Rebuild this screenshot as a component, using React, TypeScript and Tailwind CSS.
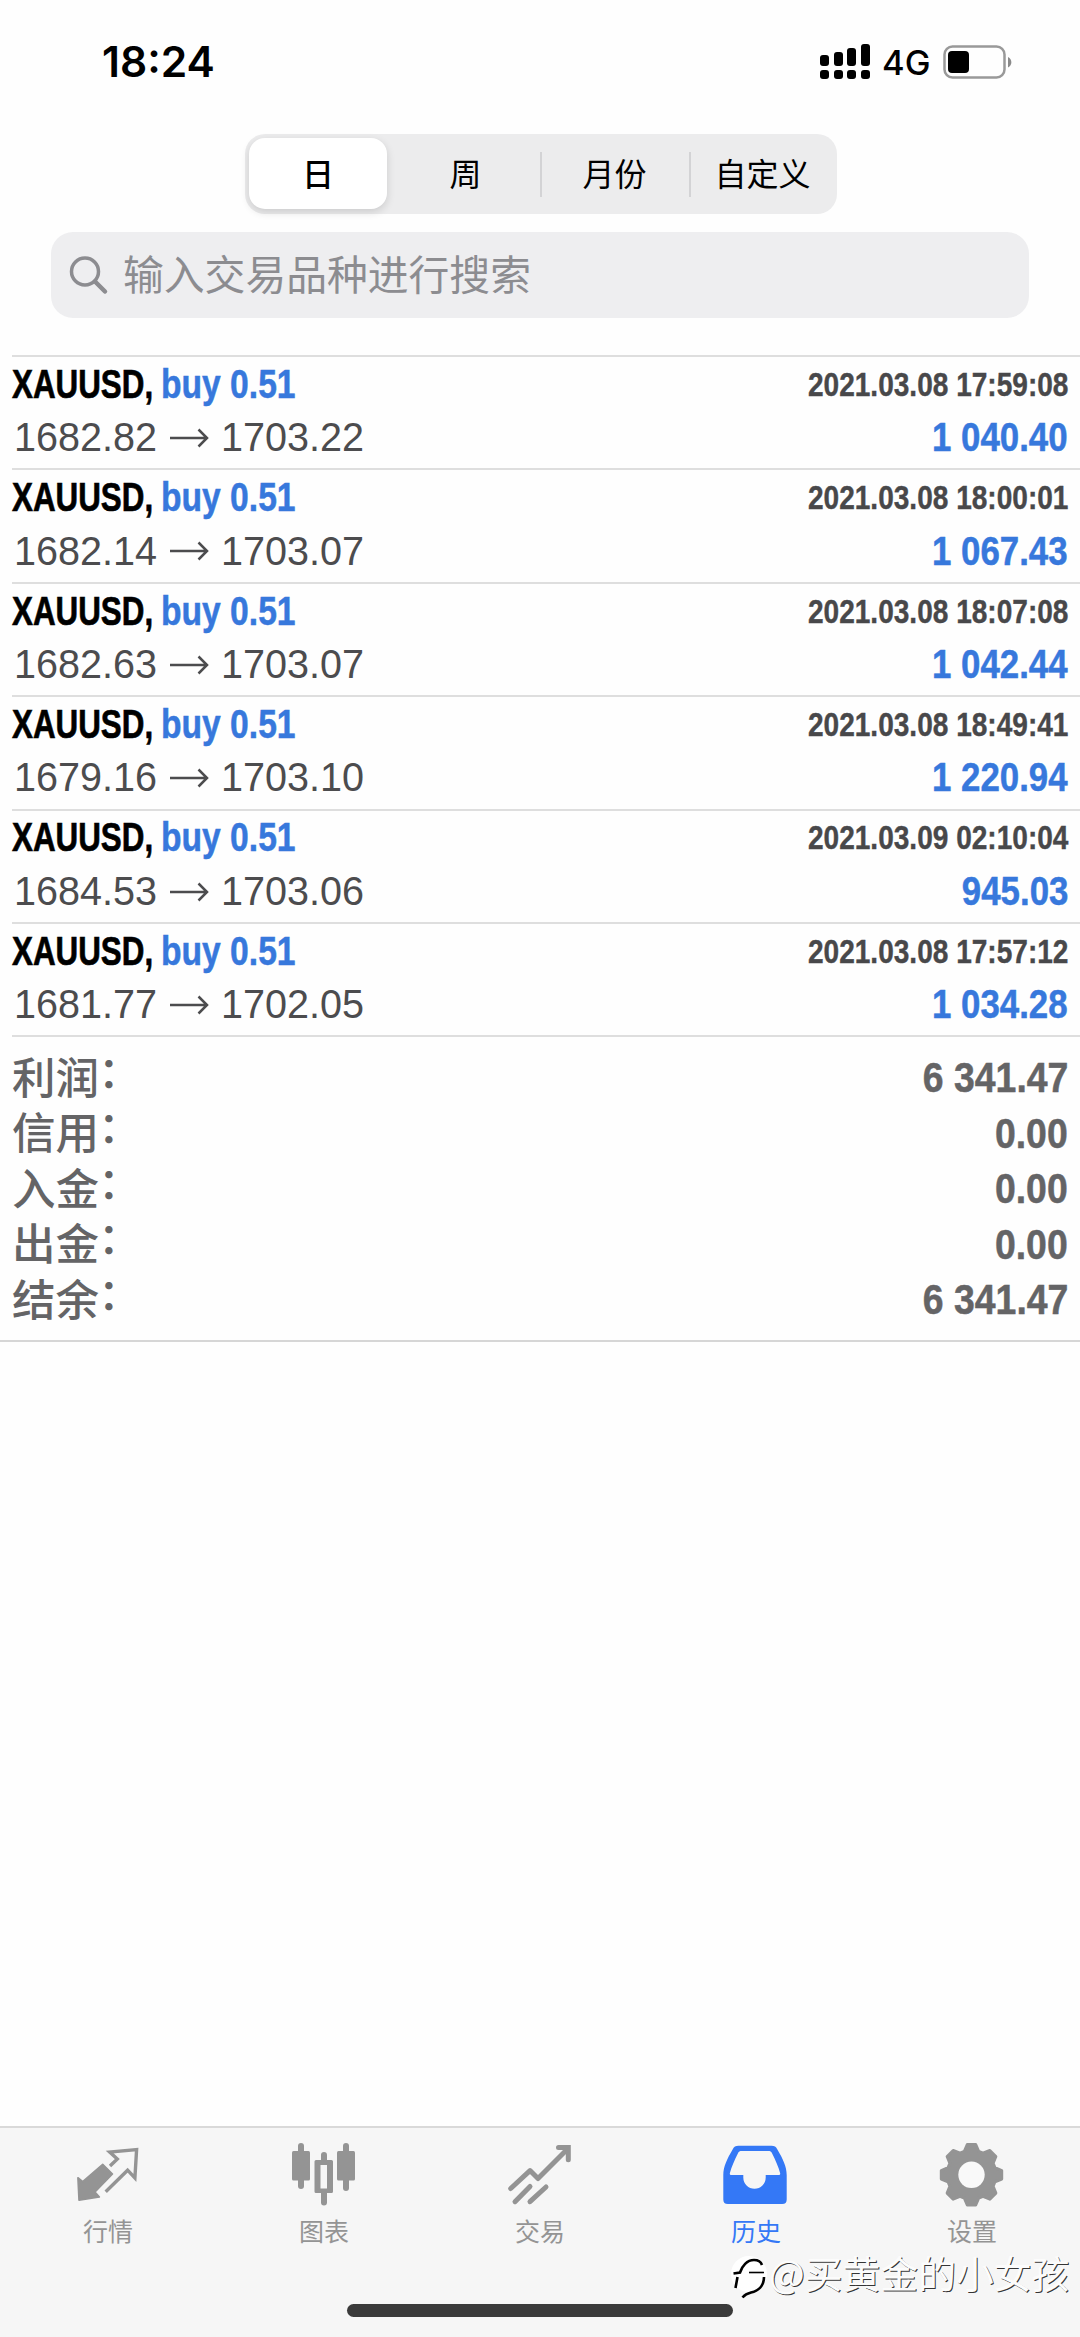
import React from "react";
import clsx from "clsx";

const periods = [
  { label: "日", width: "w-[138px]" },
  { label: "周", width: "w-[149px]" },
  { label: "月份", width: "w-[149px]" },
  { label: "自定义", width: "w-[147px]" },
];

const deals = [
  { open: "1682.82", close: "1703.22", time: "2021.03.08 17:59:08", profit: "1 040.40" },
  { open: "1682.14", close: "1703.07", time: "2021.03.08 18:00:01", profit: "1 067.43" },
  { open: "1682.63", close: "1703.07", time: "2021.03.08 18:07:08", profit: "1 042.44" },
  { open: "1679.16", close: "1703.10", time: "2021.03.08 18:49:41", profit: "1 220.94" },
  { open: "1684.53", close: "1703.06", time: "2021.03.09 02:10:04", profit: "945.03" },
  { open: "1681.77", close: "1702.05", time: "2021.03.08 17:57:12", profit: "1 034.28" },
];

const totals = [
  { label: "利润", value: "6 341.47" },
  { label: "信用", value: "0.00" },
  { label: "入金", value: "0.00" },
  { label: "出金", value: "0.00" },
  { label: "结余", value: "6 341.47" },
];

function gearPath(cx: number, cy: number) {
  const pts: string[] = [];
  for (let i = 0; i < 8; i++) {
    const steps = [[-17, 24.5], [-8, 30.5], [8, 30.5], [17, 24.5]];
    for (const [offset, r] of steps) {
      const a = ((i * 45 + offset) * Math.PI) / 180;
      pts.push(`${(cx + r * Math.sin(a)).toFixed(2)} ${(cy - r * Math.cos(a)).toFixed(2)}`);
    }
  }
  return `M${pts.join("L")}Z`;
}

const QuotesIcon = () => (
  <svg viewBox="0 0 64 66" className="w-16 h-[66px] overflow-visible" fill="none" stroke="currentColor">
    <path d="M26.7 22.3 36.5 32 19 50l4.4 5L3 58.2 1.9 35.7l4.8 4Z" fill="currentColor" strokeWidth="1.6" strokeLinejoin="round" />
    <path d="M34 24l7.3-7-7.6-7L60.6 7.6 58.9 36 51.6 28.2 29.7 49.7" strokeWidth="3.4" />
  </svg>
);

const ChartIcon = () => (
  <svg viewBox="0 0 64 66" className="w-16 h-[66px] overflow-visible" fill="currentColor">
    <rect x="0" y="9" width="18" height="29.5" rx="1.5" />
    <rect x="6" y="1" width="6" height="46" rx="3" />
    <rect x="45" y="9" width="18" height="29.5" rx="1.5" />
    <rect x="51" y="1" width="6" height="48" rx="3" />
    <path fillRule="evenodd" d="M24 18h5v-5a3 3 0 0 1 6 0v5h4.500a1.500 1.500 0 0 1 1.500 1.500v30a1.500 1.500 0 0 1-1.500 1.500H35v9.500a3 3 0 0 1-6 0V51h-5a1.500 1.500 0 0 1-1.500-1.500v-30A1.500 1.500 0 0 1 24 18ZM28.500 23v23.500h6.500V23Z" />
  </svg>
);

const TradeIcon = () => (
  <svg viewBox="0 0 64 66" className="w-16 h-[66px] overflow-visible" fill="none" stroke="currentColor" strokeWidth="5" strokeLinecap="round">
    <path d="M2.700 46.500 22 28.600l8 8L58.500 8" strokeLinejoin="round" />
    <path d="M50.500 5.500h9.800v12.300" strokeLinejoin="miter" />
    <path d="M7 59.700 22 44.500M22 59.700l16-14.700" />
  </svg>
);

const HistoryIcon = () => (
  <svg viewBox="0 0 64 66" className="w-16 h-[66px] overflow-visible" fill="currentColor">
    <path
      fillRule="evenodd"
      d="M14.500 3.700h33c3 0 4.500 1 5.600 3.400C59 17 62.700 25 62.700 33v24.500c0 3-1.500 4.500-4.500 4.500H3.800C.8 62-.7 60.500-.7 57.500V33C-.7 25 3 17 8.900 7.100 10 4.700 11.500 3.700 14.500 3.700ZM17.500 9c-1.700 0-2.700.6-3.400 2C10.500 18 7.500 25 5.900 31c-.4 1.500.2 2 1.600 2h11.800v2.500a11.200 11.200 0 0 0 22.400 0V33h12.800c1.400 0 2-.5 1.600-2-1.600-6-4.600-13-8.200-20-.7-1.400-1.700-2-3.400-2Z"
    />
  </svg>
);

const SettingsIcon = () => (
  <svg viewBox="0 0 64 66" className="w-16 h-[66px] overflow-visible">
    <path d={gearPath(31.5, 32.8)} fill="currentColor" stroke="currentColor" strokeWidth="3" strokeLinejoin="round" />
    <circle cx="31.5" cy="32.8" r="13.2" fill="#f9f9f9" />
  </svg>
);

const tabs = [
  { label: "行情", icon: <QuotesIcon /> },
  { label: "图表", icon: <ChartIcon /> },
  { label: "交易", icon: <TradeIcon /> },
  { label: "历史", icon: <HistoryIcon />, active: true },
  { label: "设置", icon: <SettingsIcon /> },
];

function StatusBar() {
  return (
    <div className="h-[134px] pt-[36px] pl-[102px] pr-[67px] flex justify-between items-start font-['Inter',sans-serif] text-black">
      <span className="text-[42.500px] leading-[51px] font-semibold">18:24</span>
      <div className="flex items-center h-[51px]">
        <svg viewBox="0 0 50 36" className="w-[50px] h-[36px]">
          <rect x="0" y="11" width="9" height="11" rx="3" />
          <rect x="14" y="8" width="9" height="14" rx="3" />
          <rect x="27" y="4" width="9" height="18" rx="3" />
          <rect x="41" y="0" width="9" height="22" rx="3" />
          <rect x="0" y="26" width="9" height="9" rx="3" />
          <rect x="14" y="26" width="9" height="9" rx="3" />
          <rect x="27" y="26" width="9" height="9" rx="3" />
          <rect x="41" y="26" width="9" height="9" rx="3" />
        </svg>
        <span className="ml-[12px] w-[49px] text-[34.500px] leading-[51px] pt-[2px] whitespace-nowrap font-medium">4G</span>
        <svg viewBox="0 0 70 34" className="ml-[12px] w-[70px] h-[34px]">
          <rect x="1.500" y="1.500" width="60" height="31" rx="8" fill="none" stroke="#999" strokeWidth="2.500" />
          <rect x="5" y="6" width="21" height="22" rx="4" />
          <path d="M65 12c4.500 2 4.500 8.500 0 10.500Z" fill="#8a8a8a" />
        </svg>
      </div>
    </div>
  );
}

function PeriodSwitch() {
  return (
    <div className="ml-[245px] w-[592px] h-[80px] rounded-[20px] bg-[#ececed] p-[4px] flex">
      {periods.map((p, i) => (
        <div
          key={p.label}
          className={clsx(
            "h-[71px] shrink-0 flex items-center justify-center pb-[3px] text-[32px] text-black relative",
            p.width,
            i === 0 && "mr-[4px] rounded-[16px] bg-white font-medium shadow-[0_3px_8px_rgba(0,0,0,0.14)]"
          )}
        >
          {p.label}
          {i > 1 && <span className="absolute left-0 top-[14px] w-[2px] h-[45px] bg-[#d3d3d5]" />}
        </div>
      ))}
    </div>
  );
}

function SearchBox() {
  return (
    <div className="mt-[18px] ml-[51px] w-[978px] h-[86px] rounded-[22px] bg-[#eeeef0] flex items-center pl-[18px] text-[#8c8c90]">
      <svg viewBox="0 0 40 40" className="w-[40px] h-[40px]" fill="none" stroke="currentColor" strokeWidth="3.500" strokeLinecap="round">
        <circle cx="16" cy="16.500" r="13.500" />
        <path d="M26 26.500 36 36.500" strokeWidth="4.500" />
      </svg>
      <span className="ml-[14px] pb-[4px] text-[40.800px] leading-none">输入交易品种进行搜索</span>
    </div>
  );
}

function DealRow({ deal }: { deal: (typeof deals)[number] }) {
  return (
    <div className="h-[113.400px] ml-[12px] pr-[12px] pt-px border-t-2 border-[#dedede] font-['Liberation_Sans',Arial,sans-serif]">
      <div className="flex h-[53px] items-center font-bold whitespace-nowrap">
        <span className="w-[149px] text-[41px] text-black [-webkit-text-stroke:0.7px]">
          <span className="inline-block origin-left scale-x-[0.765]">XAUUSD,</span>
        </span>
        <span className="text-[41px] text-[#3778dc] [-webkit-text-stroke:0.5px]">
          <span className="inline-block origin-left scale-x-[0.82]">buy 0.51</span>
        </span>
        <span className="ml-auto text-[33px] text-[#48484a] origin-right scale-x-[0.85] [-webkit-text-stroke:0.4px]">{deal.time}</span>
      </div>
      <div className="flex h-[54px] items-center text-[41px] text-[#4c4c4e] whitespace-nowrap">
        <span className="w-[157px] pl-[2px]">
          <span className="inline-block origin-left scale-x-[0.965]">{deal.open}</span>
        </span>
        <span className="w-[52px] flex">
          <svg viewBox="0 0 40 20" className="w-[40px] h-[20px]" fill="none" stroke="currentColor" strokeWidth="2.500">
            <path d="M1 10h37M29.500 1.500 38 10l-8.500 8.500" />
          </svg>
        </span>
        <span className="origin-left scale-x-[0.965]">{deal.close}</span>
        <span className="ml-auto font-bold text-[#3778dc] origin-right scale-x-[0.85] [-webkit-text-stroke:0.5px]">{deal.profit}</span>
      </div>
    </div>
  );
}

function Totals() {
  return (
    <div className="h-[304.600px]">
      <div className="ml-[12px] pr-[12px] pt-[12px] border-t-2 border-[#dedede] text-[#646466]">
        {totals.map((t) => (
          <div key={t.label} className="h-[55.500px] flex items-center justify-between">
            <span className="pb-[3px] text-[43.500px] leading-none font-medium flex">
              {t.label}
              <span className="-mt-[6px] -ml-px">：</span>
            </span>
            <span className="pt-px font-['Liberation_Sans',Arial,sans-serif] text-[43px] leading-none font-bold origin-right scale-x-[0.87] [-webkit-text-stroke:0.5px]">
              {t.value}
            </span>
          </div>
        ))}
      </div>
    </div>
  );
}

function TabBar() {
  return (
    <nav className="h-[211px] border-t-2 border-[#d9d9d9] bg-[#f6f6f6] relative">
      <div className="grid grid-cols-5 pt-[14px]">
        {tabs.map((tab) => (
          <div key={tab.label} className={clsx("flex flex-col items-center", tab.active ? "text-[#3478f6]" : "text-[#949494]")}>
            {tab.icon}
            <span className="mt-[9px] text-[25px] leading-[26px]">{tab.label}</span>
          </div>
        ))}
      </div>
      <div className="absolute left-[347px] top-[176px] w-[386px] h-[13px] rounded-full bg-[#3a3a3a]" />
      {/* watermark */}
      <div className="absolute left-[732px] top-[121px] flex items-center whitespace-nowrap">
        <svg viewBox="0 0 38 46" className="w-[38px] h-[46px] overflow-visible" fill="none">
          <circle cx="17" cy="25" r="18" fill="#fff" />
          <path d="M1.500 24.500 8 23.500C10 17 15 11 22 11c4 0 7 2 8 5" stroke="#000" strokeWidth="2.600" />
          <path d="M17 23.500h15" stroke="#000" strokeWidth="1.600" />
          <path d="M5.500 28 3.500 39M32 28c0 9-6 14-13 15.500-4 1-6 2-8.500 5" stroke="#000" strokeWidth="2.600" />
        </svg>
        <span className="-ml-px text-[37.800px] leading-[46px] text-[#fcfcfc] [text-shadow:1px_1px_0.5px_rgba(0,0,0,0.8)]">@买黄金的小女孩</span>
      </div>
    </nav>
  );
}

export default function App() {
  return (
    <div className="w-[1080px] h-[2337px] bg-[#fefefe] flex flex-col overflow-hidden font-['Noto_Sans_CJK_SC',sans-serif]">
      <StatusBar />
      <PeriodSwitch />
      <SearchBox />
      <div className="mt-[37px]">
        {deals.map((d) => (
          <DealRow key={d.time} deal={d} />
        ))}
      </div>
      <Totals />
      <div className="flex-1 border-t-2 border-[#d6d6d6]" />
      <TabBar />
    </div>
  );
}
